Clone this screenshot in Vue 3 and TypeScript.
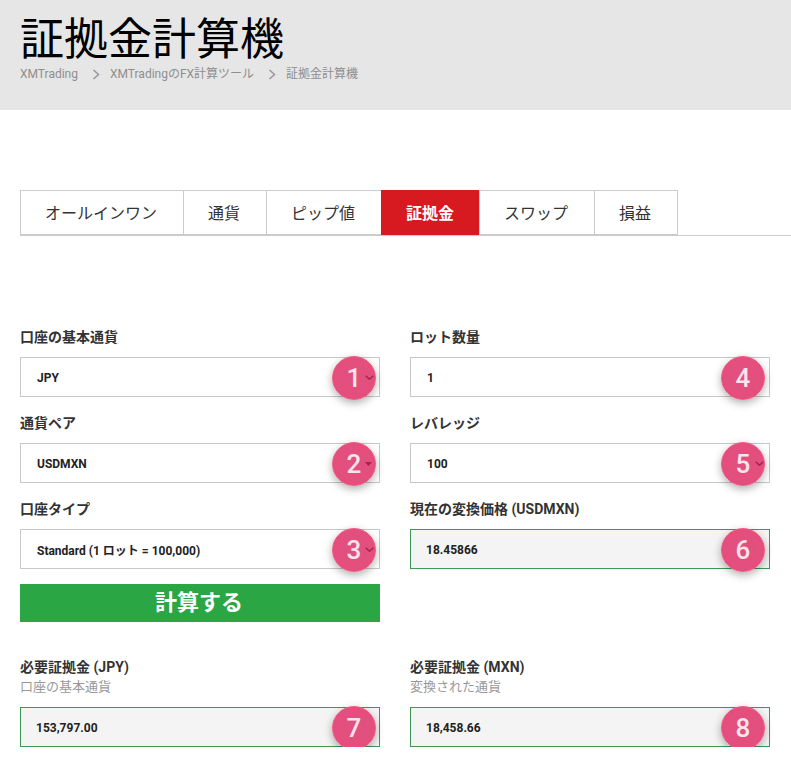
<template>
  <div class="page">
    <header class="hero">
      <h1>証拠金計算機</h1>
      <nav class="crumbs">
        <template v-for="(crumb, i) in crumbs" :key="crumb">
          <svg v-if="i > 0" class="crumb-sep" width="8" height="11" viewBox="0 0 8 11">
            <path d="M1.5 1 L6.5 5.5 L1.5 10" fill="none" stroke="#999" stroke-width="1.6" />
          </svg>
          <span>{{ crumb }}</span>
        </template>
      </nav>
    </header>

    <ul class="tabs">
      <li v-for="tab in tabs" :key="tab" :class="{ active: tab === activeTab }">{{ tab }}</li>
    </ul>

    <div class="form">
      <div class="col">
        <div v-for="f in leftFields" :key="f.badge" class="field">
          <label>{{ f.label }}</label>
          <div class="box">
            <span>{{ f.value }}</span>
            <b class="badge">{{ f.badge }}</b>
            <svg v-if="f.arrow === 'chevron'" class="arrow" width="9" height="5" viewBox="0 0 9 5">
              <path d="M0.7 0.7 L4.5 4.2 L8.3 0.7" fill="none" stroke="#a32450" stroke-width="1.5" />
            </svg>
            <svg v-else class="arrow tri" width="7" height="4" viewBox="0 0 7 4">
              <path d="M0 0 H7 L3.5 4 Z" fill="#a32450" />
            </svg>
          </div>
        </div>
        <button class="calc" type="button">計算する</button>
      </div>

      <div class="col right">
        <div v-for="f in rightFields" :key="f.badge" class="field">
          <label>{{ f.label }}</label>
          <div class="box" :class="{ result: f.result }">
            <span>{{ f.value }}</span>
            <b class="badge">{{ f.badge }}</b>
            <svg v-if="f.arrow" class="arrow" width="9" height="5" viewBox="0 0 9 5">
              <path d="M0.7 0.7 L4.5 4.2 L8.3 0.7" fill="none" stroke="#a32450" stroke-width="1.5" />
            </svg>
          </div>
        </div>
      </div>

      <div v-for="r in results" :key="r.badge" class="field total" :class="{ right: r.badge === 8 }">
        <label>{{ r.label }}</label>
        <small>{{ r.note }}</small>
        <div class="box result">
          <span>{{ r.value }}</span>
          <b class="badge">{{ r.badge }}</b>
        </div>
      </div>
    </div>
  </div>
</template>

<script setup lang="ts">
const crumbs = ['XMTrading', 'XMTradingのFX計算ツール', '証拠金計算機']
const tabs = ['オールインワン', '通貨', 'ピップ値', '証拠金', 'スワップ', '損益']
const activeTab = '証拠金'

const leftFields = [
  { label: '口座の基本通貨', value: 'JPY', badge: 1, arrow: 'chevron' },
  { label: '通貨ペア', value: 'USDMXN', badge: 2, arrow: 'triangle' },
  { label: '口座タイプ', value: 'Standard (1 ロット = 100,000)', badge: 3, arrow: 'chevron' }
]

const rightFields = [
  { label: 'ロット数量', value: '1', badge: 4, arrow: false, result: false },
  { label: 'レバレッジ', value: '100', badge: 5, arrow: true, result: false },
  { label: '現在の変換価格 (USDMXN)', value: '18.45866', badge: 6, arrow: false, result: true }
]

const results = [
  { label: '必要証拠金 (JPY)', note: '口座の基本通貨', value: '153,797.00', badge: 7 },
  { label: '必要証拠金 (MXN)', note: '変換された通貨', value: '18,458.66', badge: 8 }
]
</script>

<style>
html,
body {
  margin: 0;
  background: #fff;
}
</style>

<style scoped>
.page {
  font-family: Roboto, "Noto Sans CJK JP", sans-serif;
  color: #333;
}

.hero {
  height: 110px;
  box-sizing: border-box;
  padding: 14px 20px 0;
  background: #e6e6e6;
}

h1 {
  margin: 0;
  font-size: 44px;
  font-weight: 400;
  line-height: 53px;
  color: #000;
}

.crumbs {
  display: flex;
  align-items: center;
  height: 14px;
  font-size: 12px;
  line-height: 14px;
  color: #8e8e8e;
}

.crumb-sep {
  margin: 0 10px 0 14px;
}

.tabs {
  display: flex;
  margin: 80px 0 0 20px;
  padding: 0;
  height: 45px;
  list-style: none;
  border-bottom: 1px solid #ccc;
}

.tabs li {
  display: flex;
  align-items: center;
  padding: 0 26px 2px 24px;
  font-size: 16px;
  color: #333;
  border: 1px solid #ccc;
  border-right: 0;
}

.tabs li:last-child {
  border-right: 1px solid #ccc;
}

.tabs li.active {
  padding: 0 25px 2px;
  background: #d71920;
  border: 0;
  color: #fff;
  font-weight: 700;
}

.form {
  display: grid;
  grid-template-columns: 360px 360px;
  column-gap: 30px;
  padding: 91px 20px 0;
}

.field {
  margin-bottom: 16px;
}

.col .field:last-of-type {
  margin-bottom: 15px;
}

label {
  display: block;
  margin-bottom: 10px;
  font-size: 14px;
  font-weight: 700;
  line-height: 20px;
  color: #333;
}

.total {
  margin: 35px 0 0;
}

.total label {
  margin: 0;
}

small {
  display: block;
  margin-bottom: 10px;
  font-size: 13px;
  line-height: 20px;
  color: #999;
}

.box {
  position: relative;
  display: flex;
  align-items: center;
  height: 40px;
  box-sizing: border-box;
  padding: 1px 0 0 16px;
  font-size: 12px;
  font-weight: 700;
  color: #222;
  background: #fff;
  border: 1px solid #c8c8c8;
}

.box.result {
  padding-left: 15px;
  background: #f4f4f4;
  border-color: #3d9a52;
}

.arrow {
  position: absolute;
  right: 5px;
  top: 17px;
}

.arrow.tri {
  right: 7px;
  top: 18px;
}

.badge {
  position: absolute;
  right: 3px;
  top: -2px;
  width: 44px;
  height: 44px;
  display: flex;
  align-items: center;
  justify-content: center;
  box-sizing: border-box;
  border: 1px solid #ef5a85;
  border-radius: 50%;
  background: radial-gradient(circle, #e0507f 0%, #e34f7e 55%, #ea4977 100%);
  box-shadow: 0 3px 8px rgba(0, 0, 0, 0.32);
  font-size: 26px;
  font-weight: 500;
  color: #fde3ea;
}

.right .badge {
  right: 4px;
}

.calc {
  display: block;
  width: 100%;
  height: 38px;
  padding: 0 2px 6px 0;
  border: 0;
  background: #2aa744;
  color: #fff;
  font-family: inherit;
  font-size: 22px;
  font-weight: 700;
}
</style>
